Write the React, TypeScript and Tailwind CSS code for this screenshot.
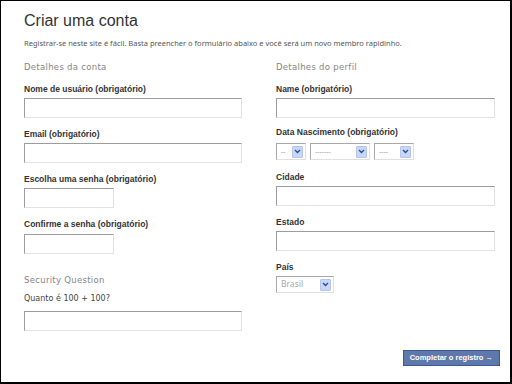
import type { ReactNode } from 'react';

const label = 'block text-[8.5px] font-bold leading-[10px] text-[#333] [font-family:"Liberation_Sans",Arial,sans-serif]';
const section = 'text-[8.5px] leading-[10px] tracking-[0.3px] text-[#858585] [font-family:"DejaVu_Sans",sans-serif]';
const input = 'block h-[20px] border border-t-[#9c9c9c] border-l-[#9c9c9c] border-r-[#e2e2e2] border-b-[#e2e2e2] bg-white';

function Field({ title, className, children }: { title: string; className?: string; children: ReactNode }) {
  return (
    <div className={className}>
      <span className={label}>{title}</span>
      {children}
    </div>
  );
}

function Select({ text, width, muted }: { text: string; width: string; muted?: boolean }) {
  return (
    <div
      className={`flex h-[17px] items-center justify-between border border-t-[#a8a8a8] border-l-[#a8a8a8] border-r-[#e0e0e0] border-b-[#e0e0e0] bg-white pl-[4px] pr-[2px] ${width}`}
    >
      <span
        className={`leading-none [font-family:"Noto_Sans",sans-serif] ${muted ? 'text-[8.5px] text-[#a8a8a8]' : 'text-[7px] text-[#9a9a9a]'}`}
      >
        {text}
      </span>
      <span className="flex h-[12px] w-[11px] items-center justify-center rounded-[1px] border border-[#b4c6ef] bg-[#c9d7f7]">
        <svg width="7" height="5" viewBox="0 0 7 5">
          <path d="M1 1l2.5 2.5L6 1" fill="none" stroke="#2c4a9a" strokeWidth="1.4" />
        </svg>
      </span>
    </div>
  );
}

export default function App() {
  return (
    <div className="h-[384px] w-[512px] overflow-hidden border-t border-l border-r-2 border-b-2 border-black bg-white">
      <div className="pl-[23px] pr-[12px] pt-[12px]">
        <h1 className="text-[16px] leading-[16px] text-[#333] [font-family:'Liberation_Sans',Arial,sans-serif]">
          Criar uma conta
        </h1>
        <p className="mt-[9px] text-[7.5px] leading-[10px] text-[#555] [font-family:'Noto_Sans',sans-serif]">
          Registrar-se neste site é fácil. Basta preencher o formulário abaixo e você será um novo membro rapidinho.
        </p>

        <div className="mt-[14px] flex gap-[34px]">
          <div className="flex w-[218px] flex-col">
            <h2 className={section}>Detalhes da conta</h2>
            <Field title="Nome de usuário (obrigatório)" className="mt-[12px]">
              <div className={`${input} mt-[4px] w-[218px]`} />
            </Field>
            <Field title="Email (obrigatório)" className="mt-[11px]">
              <div className={`${input} mt-[4px] w-[218px]`} />
            </Field>
            <Field title="Escolha uma senha (obrigatório)" className="mt-[11px]">
              <div className={`${input} mt-[4px] w-[90px]`} />
            </Field>
            <Field title="Confirme a senha (obrigatório)" className="mt-[11px]">
              <div className={`${input} mt-[5px] w-[90px]`} />
            </Field>
            <h2 className={`${section} mt-[21px]`}>Security Question</h2>
            <p className="mt-[9px] text-[8px] leading-[10px] text-[#444] [font-family:'DejaVu_Sans',sans-serif]">
              Quanto é 100 + 100?
            </p>
            <div className={`${input} mt-[7px] w-[218px]`} />
          </div>

          <div className="flex w-[219px] flex-col">
            <h2 className={section}>Detalhes do perfil</h2>
            <Field title="Name (obrigatório)" className="mt-[12px]">
              <div className={`${input} mt-[4px] w-[219px]`} />
            </Field>
            <Field title="Data Nascimento (obrigatório)" className="mt-[9px]">
              <div className="mt-[6px] flex gap-[4px]">
                <Select text="--" width="w-[30px]" />
                <Select text="-------" width="w-[60px]" />
                <Select text="----" width="w-[40px]" />
              </div>
            </Field>
            <Field title="Cidade" className="mt-[12px]">
              <div className={`${input} mt-[4px] w-[219px]`} />
            </Field>
            <Field title="Estado" className="mt-[11px]">
              <div className={`${input} mt-[4px] w-[219px]`} />
            </Field>
            <Field title="País" className="mt-[11px]">
              <div className="mt-[4px]">
                <Select text="Brasil" width="w-[58px]" muted />
              </div>
            </Field>
            <div className="mt-[57px] flex justify-end">
              <button className="mr-[-5px] h-[16px] border border-[#3b5998] bg-[#5f78ab] px-[6px] text-[7.5px] font-bold leading-none text-white [font-family:'Liberation_Sans',Arial,sans-serif]">
                Completar o registro →
              </button>
            </div>
          </div>
        </div>
      </div>
    </div>
  );
}
